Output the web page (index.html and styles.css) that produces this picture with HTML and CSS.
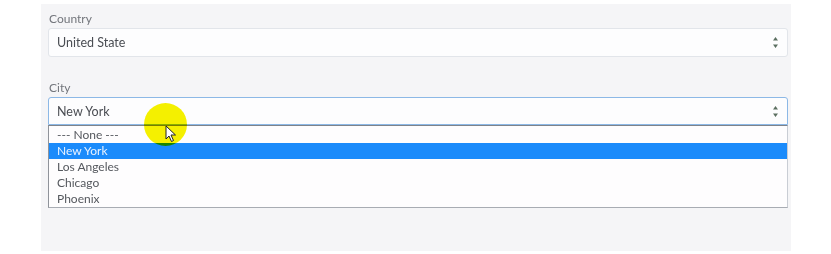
FILE: index.html
```html
<!DOCTYPE html>
<html lang="en">
<head>
    <meta charset="UTF-8">
    <title>Country / City</title>
    <link rel="stylesheet" href="styles.css">
</head>
<body>
    <div class="panel">
        <label class="field-label">Country</label>
        <div class="select-box">
            <span>United State</span>
            <svg class="arrows" width="5" height="11" viewBox="0 0 5 11"><path d="M2.5 0 L5 3.5 L0 3.5 Z M0 7.5 L5 7.5 L2.5 11 Z"/></svg>
        </div>

        <label class="field-label city">City</label>
        <div class="select-box focused">
            <span>New York</span>
            <svg class="arrows" width="5" height="11" viewBox="0 0 5 11"><path d="M2.5 0 L5 3.5 L0 3.5 Z M0 7.5 L5 7.5 L2.5 11 Z"/></svg>
        </div>
        <ul class="options">
            <li>--- None ---</li>
            <li class="selected">New York</li>
            <li>Los Angeles</li>
            <li>Chicago</li>
            <li>Phoenix</li>
        </ul>

        <!-- screen recorder click highlight -->
        <div class="click-spot"></div>
        <svg class="cursor" width="12" height="18" viewBox="0 0 12 18">
            <path d="M1 1 L1 14 L4 11 L6.5 16.5 L8.5 15.5 L6 10 L10.5 10 Z" fill="#fff" stroke="#222" stroke-width="1"/>
        </svg>
    </div>
</body>
</html>
```

FILE: styles.css
```css
body {
    margin: 0;
    background-color: #ffffff;
    font-family: Lato, "Open Sans", sans-serif;
}
.panel {
    position: relative;
    margin: 4px 0 0 41px;
    width: 750px;
    height: 247px;
    box-sizing: border-box;
    padding: 7px 3px 0 7px;
    background-color: #f5f5f7;
}
.field-label {
    display: block;
    font-size: 12px;
    line-height: 16px;
    color: #73767c;
    margin: 0 0 1px 1px;
}
.field-label.city {
    margin-top: 23px;
}
.select-box {
    display: flex;
    align-items: center;
    justify-content: space-between;
    height: 29px;
    box-sizing: border-box;
    padding: 0 9px 0 8px;
    background-color: #fdfdfe;
    border: 1px solid #e2e5ea;
    border-radius: 3px;
    font-size: 12.5px;
    color: #4a4d53;
}
.select-box.focused {
    height: 28px;
    border-color: #8cb8e6;
    border-radius: 3px 3px 0 0;
}
.arrows {
    fill: #5b6f60;
}
.options {
    list-style: none;
    margin: 0;
    padding: 1px 0 0 0;
    background-color: #fefdfe;
    border: 1px solid #a8acb3;
    border-top-color: #7f838a;
    border-left-color: #8f939a;
    border-right-color: #c9cdd4;
}
.options li {
    height: 16px;
    line-height: 16px;
    padding-left: 8px;
    font-size: 12px;
    color: #55585e;
}
.options li.selected {
    background-color: #1b8bfb;
    color: #e9f2ff;
}
.click-spot {
    position: absolute;
    left: 103px;
    top: 99px;
    width: 43px;
    height: 43px;
    border-radius: 50%;
    background-color: #f6f200;
    mix-blend-mode: multiply;
}
.cursor {
    position: absolute;
    left: 124px;
    top: 121px;
}
```
